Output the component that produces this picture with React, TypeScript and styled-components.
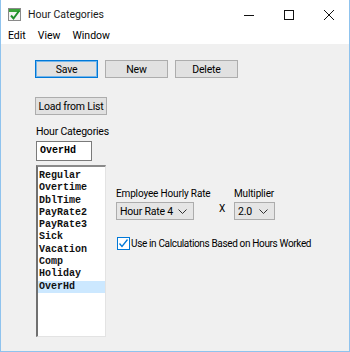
import styled, { createGlobalStyle } from "styled-components";

const Global = createGlobalStyle`
    html, body {
        margin: 0;
        padding: 0;
        background: #ffffff;
    }
    body {
        font-family: Roboto, "Liberation Sans", Arial, sans-serif;
        font-size: 10px;
        letter-spacing: -0.15px;
        color: #000000;
    }
`;

const Window = styled.div`
    width: 350px;
    height: 352px;
    box-sizing: border-box;
    border: 1px solid #8fc3ee;
    border-top: none;
    display: flex;
    flex-direction: column;
    background: #f0f0f0;
`;

const TitleBar = styled.div`
    height: 29px;
    background: #ffffff;
    display: flex;
    align-items: center;
    padding-left: 7px;
    font-size: 10.5px;
    letter-spacing: 0;
`;

const TitleText = styled.span`
    margin-left: 7px;
    flex: 1;
    color: #1a1a1a;
`;

const WinButton = styled.div`
    width: 40px;
    height: 29px;
    display: flex;
    align-items: center;
    justify-content: center;
`;

const MenuBar = styled.div`
    height: 15px;
    background: #ffffff;
    display: flex;
    align-items: flex-start;
    padding-left: 7px;
    gap: 12px;
    font-size: 10.5px;
    letter-spacing: 0;
    line-height: 13px;
`;

const Body = styled.div`
    flex: 1;
    padding: 16px 0 0 34px;
    display: flex;
    flex-direction: column;
    align-items: flex-start;
`;

const ButtonRow = styled.div`
    display: flex;
    gap: 7px;
`;

const Button = styled.button<{ $default?: boolean; $width: number }>`
    width: ${p => p.$width}px;
    height: 18px;
    box-sizing: border-box;
    padding: 0;
    font-family: inherit;
    font-size: 10.5px;
    letter-spacing: -0.2px;
    color: #000;
    background: #e1e1e1;
    border: 1px solid ${p => (p.$default ? "#0078d7" : "#adadad")};
    box-shadow: ${p => (p.$default ? "inset 0 0 0 1px #73b5ea" : "none")};
`;

const LoadButton = styled(Button)`
    margin-top: 19px;
`;

const FieldLabel = styled.div`
    margin-top: 10px;
    margin-left: 1px;
    height: 14px;
    line-height: 14px;
    font-size: 10.5px;
    letter-spacing: -0.2px;
`;

const TextBox = styled.div`
    margin-top: 2px;
    margin-left: 1px;
    width: 56px;
    height: 20px;
    box-sizing: border-box;
    background: #ffffff;
    border: 1px solid #7a7a7a;
    padding-left: 3px;
    font-family: "Liberation Mono", "Courier New", monospace;
    font-weight: bold;
    font-size: 10px;
    letter-spacing: 0;
    line-height: 18px;
`;

const Lower = styled.div`
    display: flex;
    margin-top: 4px;
    margin-left: 1px;
`;

const ListBox = styled.div`
    width: 70px;
    height: 172px;
    box-sizing: border-box;
    background: #ffffff;
    border-top: 2px solid #8a8a8a;
    border-left: 2px solid #707070;
    border-right: 1px solid #e3e3e3;
    border-bottom: 1px solid #e3e3e3;
    padding-top: 3px;
`;

const ListItem = styled.div<{ $selected?: boolean }>`
    height: 12.3px;
    line-height: 12px;
    padding-left: 1px;
    font-family: "Liberation Mono", "Courier New", monospace;
    font-weight: bold;
    font-size: 10px;
    letter-spacing: 0;
    color: #111;
    background: ${p => (p.$selected ? "#cce8ff" : "transparent")};
`;

const RightPanel = styled.div`
    padding: 23px 0 0 10px;
    display: flex;
    flex-direction: column;
`;

const RateRow = styled.div`
    display: flex;
    align-items: flex-end;
`;

const Field = styled.div<{ $width: number }>`
    width: ${p => p.$width}px;
    display: flex;
    flex-direction: column;
    gap: 3px;
    white-space: nowrap;
`;

const Times = styled.div`
    width: 24px;
    text-align: center;
    padding-bottom: 6px;
`;

const Select = styled.div<{ $width: number }>`
    width: ${p => p.$width}px;
    height: 18px;
    box-sizing: border-box;
    background: #e5e5e5;
    border: 1px solid #acacac;
    display: flex;
    align-items: center;
    justify-content: space-between;
    padding: 0 6px 0 3px;
    font-size: 10.5px;
    letter-spacing: -0.2px;
    white-space: nowrap;
`;

const CheckRow = styled.div`
    display: flex;
    align-items: center;
    margin-top: 17px;
    margin-left: 1px;
    gap: 1px;
    white-space: nowrap;
    letter-spacing: -0.35px;
`;

const CheckBox = styled.div`
    width: 13px;
    height: 13px;
    box-sizing: border-box;
    border: 1px solid #0078d7;
    background: #ffffff;
    display: flex;
    align-items: center;
    justify-content: center;
`;

const categories = [
    "Regular",
    "Overtime",
    "DblTime",
    "PayRate2",
    "PayRate3",
    "Sick",
    "Vacation",
    "Comp",
    "Holiday",
    "OverHd",
];

function Chevron() {
    return (
        <svg width="9" height="5" viewBox="0 0 9 5">
            <path d="M0.5 0.5 L4.5 4.5 L8.5 0.5" fill="none" stroke="#333" strokeWidth="1" />
        </svg>
    );
}

export default function App() {
    return (
        <>
            <Global />
            <Window>
                <TitleBar>
                    <svg width="13" height="13" viewBox="0 0 13 13">
                        <rect x="0.5" y="0.5" width="12" height="12" fill="#f4f4f4" stroke="#8a8a8a" />
                        <rect x="1" y="1" width="11" height="3" fill="#3aa33a" />
                        <path d="M3 7.5 L5.5 10.5 L11 3" fill="none" stroke="#1f8f2a" strokeWidth="2" />
                    </svg>
                    <TitleText>Hour Categories</TitleText>
                    <WinButton>
                        <svg width="10" height="10" viewBox="0 0 10 10">
                            <path d="M0 5.5 H10" stroke="#111" strokeWidth="1" />
                        </svg>
                    </WinButton>
                    <WinButton>
                        <svg width="10" height="10" viewBox="0 0 10 10">
                            <rect x="0.5" y="0.5" width="9" height="9" fill="none" stroke="#111" />
                        </svg>
                    </WinButton>
                    <WinButton>
                        <svg width="10" height="10" viewBox="0 0 10 10">
                            <path d="M0 0 L10 10 M10 0 L0 10" stroke="#111" strokeWidth="1" />
                        </svg>
                    </WinButton>
                </TitleBar>
                <MenuBar>
                    <span>Edit</span>
                    <span>View</span>
                    <span>Window</span>
                </MenuBar>
                <Body>
                    <ButtonRow>
                        <Button $default $width={63}>Save</Button>
                        <Button $width={63}>New</Button>
                        <Button $width={63}>Delete</Button>
                    </ButtonRow>
                    <LoadButton $width={72}>Load from List</LoadButton>
                    <FieldLabel>Hour Categories</FieldLabel>
                    <TextBox>OverHd</TextBox>
                    <Lower>
                        <ListBox>
                            {categories.map(c => (
                                <ListItem key={c} $selected={c === "OverHd"}>{c}</ListItem>
                            ))}
                        </ListBox>
                        <RightPanel>
                            <RateRow>
                                <Field $width={94}>
                                    <span>Employee Hourly Rate</span>
                                    <Select $width={78}>
                                        <span>Hour Rate 4</span>
                                        <Chevron />
                                    </Select>
                                </Field>
                                <Times>X</Times>
                                <Field $width={41}>
                                    <span>Multiplier</span>
                                    <Select $width={41}>
                                        <span>2.0</span>
                                        <Chevron />
                                    </Select>
                                </Field>
                            </RateRow>
                            <CheckRow>
                                <CheckBox>
                                    <svg width="11" height="11" viewBox="0 0 11 11">
                                        <path d="M1.5 5.5 L4 8.5 L9.5 1.5" fill="none" stroke="#0078d7" strokeWidth="1.3" />
                                    </svg>
                                </CheckBox>
                                <span>Use in Calculations Based on Hours Worked</span>
                            </CheckRow>
                        </RightPanel>
                    </Lower>
                </Body>
            </Window>
        </>
    );
}
